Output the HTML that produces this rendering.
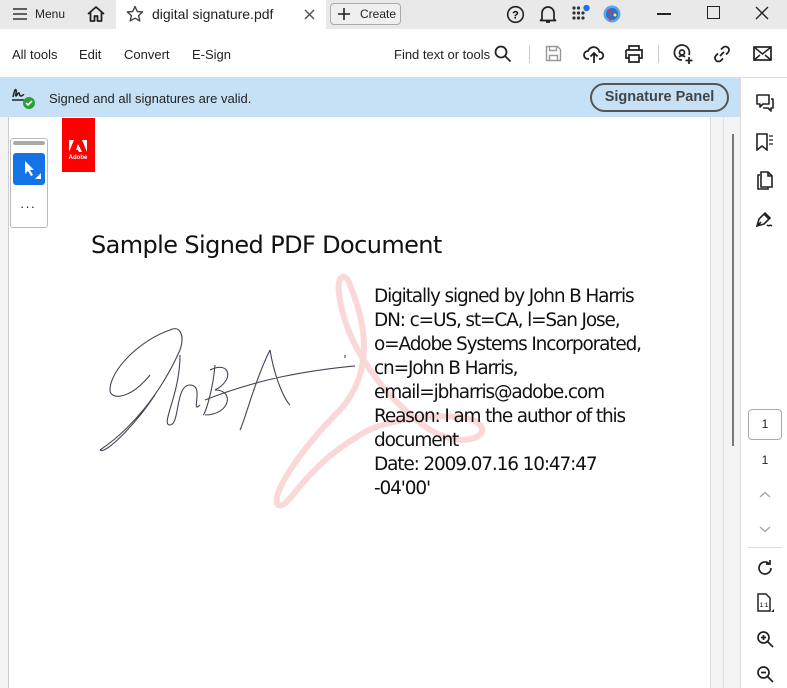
<!DOCTYPE html>
<html><head><meta charset="utf-8"><style>
*{margin:0;padding:0;box-sizing:border-box}
body{width:787px;height:688px;overflow:hidden;font-family:"Liberation Sans",sans-serif;background:#fff;position:relative;color:#222}
.abs{position:absolute}
svg{position:absolute}
.t{font-size:13px;color:#222}
</style></head><body>
<div class="abs" style="left:0;top:0;width:787px;height:29px;background:#e9e9e9"></div>
<div class="abs" style="left:116px;top:0;width:210px;height:29px;background:#fff"></div>
<svg style="left:12px;top:7px" width="16" height="14"><path d="M1 2h14M1 7h14M1 12h14" stroke="#333" stroke-width="1.6"/></svg>
<div class="abs t" style="left:35px;top:7px;font-size:12px">Menu</div>
<svg style="left:86px;top:4px" width="20" height="20"><path d="M2 10L10 3l8 7M4.5 8v9h4v-5h3v5h4V8" fill="none" stroke="#222" stroke-width="1.8" stroke-linejoin="round"/></svg>
<svg style="left:126px;top:5px" width="18" height="18"><path d="M9 1.5l2.3 5 5.3.5-4 3.6 1.2 5.3L9 13.2 4.2 15.9l1.2-5.3-4-3.6 5.3-.5z" fill="none" stroke="#444" stroke-width="1.4" stroke-linejoin="round"/></svg>
<div class="abs t" style="left:152px;top:6px;font-size:14px">digital signature.pdf</div>
<svg style="left:304px;top:9px" width="11" height="11"><path d="M1 1l9 9M10 1l-9 9" stroke="#555" stroke-width="1.5"/></svg>
<div class="abs" style="left:330px;top:3px;width:71px;height:22px;border:1px solid #aaa;border-radius:4px;background:#efefef"></div>
<svg style="left:338px;top:8px" width="12" height="12"><path d="M6 0v12M0 6h12" stroke="#222" stroke-width="1.6"/></svg>
<div class="abs t" style="left:360px;top:7px;font-size:12px">Create</div>
<svg style="left:506px;top:5px" width="19" height="19"><circle cx="9.5" cy="9.5" r="7.8" fill="none" stroke="#222" stroke-width="1.6"/><text x="9.5" y="13.5" font-size="11" font-weight="bold" text-anchor="middle" font-family="Liberation Sans">?</text></svg>
<svg style="left:539px;top:4px" width="18" height="20"><path d="M3 15V9a6 6 0 0 1 12 0v6l1.5 1.5h-15zM7 18h4" fill="none" stroke="#222" stroke-width="1.7" stroke-linejoin="round"/></svg>
<svg style="left:572px;top:5px" width="20" height="16"><g fill="#333"><circle cx="2" cy="3" r="1.6"/><circle cx="6.5" cy="3" r="1.6"/><circle cx="2" cy="8" r="1.6"/><circle cx="6.5" cy="8" r="1.6"/><circle cx="11" cy="8" r="1.6"/><circle cx="2" cy="13" r="1.6"/><circle cx="6.5" cy="13" r="1.6"/><circle cx="11" cy="13" r="1.6"/></g><circle cx="14.5" cy="3" r="3.2" fill="#1a73e8"/></svg>
<svg style="left:603px;top:5px" width="18" height="18"><circle cx="9" cy="9" r="8.5" fill="#5aa8ec"/><circle cx="9" cy="9" r="6" fill="#2a6fd0"/><path d="M5 5l3 4M10 6l3 1M6 10l1 6" stroke="#e33" stroke-width="1.5"/><circle cx="12" cy="10" r="1.5" fill="#ff0"/></svg>
<div class="abs" style="left:657px;top:13px;width:14px;height:1.5px;background:#222"></div>
<div class="abs" style="left:707px;top:6px;width:13px;height:13px;border:1.4px solid #222"></div>
<svg style="left:755px;top:6px" width="14" height="14"><path d="M1 1l12 12M13 1L1 13" stroke="#222" stroke-width="1.4"/></svg>
<div class="abs" style="left:0;top:77px;width:787px;height:1px;background:#ddd"></div>
<div class="abs t" style="left:12px;top:47px">All tools</div>
<div class="abs t" style="left:79px;top:47px">Edit</div>
<div class="abs t" style="left:124px;top:47px">Convert</div>
<div class="abs t" style="left:192px;top:47px">E-Sign</div>
<div class="abs t" style="left:394px;top:47px">Find text or tools</div>
<svg style="left:494px;top:45px" width="18" height="18"><circle cx="7" cy="7" r="5.5" fill="none" stroke="#222" stroke-width="1.8"/><path d="M11 11l5.5 5.5" stroke="#222" stroke-width="1.8"/></svg>
<div class="abs" style="left:529px;top:45px;width:1px;height:18px;background:#ccc"></div>
<svg style="left:545px;top:45px" width="17" height="17"><path d="M1.5 1.5h11l3 3v11h-14z M4.5 1.5v4h7v-4 M4.5 15.5v-5h8v5" fill="none" stroke="#999" stroke-width="1.4"/></svg>
<svg style="left:583px;top:44px" width="22" height="20"><path d="M6 15H5a4 4 0 0 1 0-8 6 6 0 0 1 11.5 1A3.5 3.5 0 0 1 17 15h-1M11 19V9M7.5 12.5L11 9l3.5 3.5" fill="none" stroke="#222" stroke-width="1.8"/></svg>
<svg style="left:624px;top:45px" width="20" height="18"><path d="M5 5V1h10v4M2 5h16v8h-3M5 13H2V5M5 10h10v7H5z" fill="none" stroke="#222" stroke-width="1.7"/></svg>
<div class="abs" style="left:658px;top:45px;width:1px;height:18px;background:#ccc"></div>
<svg style="left:673px;top:44px" width="21" height="21"><path d="M9 16a7.5 7.5 0 1 1 7-5M6 13a4 4 0 0 1 6 0M9 6a2.5 2.5 0 1 1 0 5 2.5 2.5 0 0 1 0-5M16 13v7M12.5 16.5h7" fill="none" stroke="#222" stroke-width="1.7"/></svg>
<svg style="left:713px;top:45px" width="18" height="18"><path d="M7 11l4-4M8 4.5l2-2a3.3 3.3 0 0 1 5 5l-2 2M10 13.5l-2 2a3.3 3.3 0 0 1-5-5l2-2" fill="none" stroke="#222" stroke-width="1.8"/></svg>
<svg style="left:753px;top:46px" width="19" height="15"><rect x="1" y="1" width="17" height="13" fill="none" stroke="#222" stroke-width="1.7"/><path d="M1 1l8.5 7L18 1M1 14l6-5M18 14l-6-5" fill="none" stroke="#222" stroke-width="1.5"/></svg>
<div class="abs" style="left:0;top:78px;width:741px;height:39px;background:#c6e1f5"></div>
<svg style="left:10px;top:85px" width="28" height="26"><path d="M3 12c1-4 2-9 3-7s-1 6 0 6 2-4 3-3 0 3 2 3 2-2 3-1" fill="none" stroke="#222" stroke-width="1.5"/><path d="M2 15h12" stroke="#222" stroke-width="1.5"/><circle cx="19" cy="18" r="6" fill="#2d9d3a"/><path d="M16 18l2 2 4-4" fill="none" stroke="#fff" stroke-width="1.6"/></svg>
<div class="abs t" style="left:49px;top:91px;font-size:13px">Signed and all signatures are valid.</div>
<div class="abs" style="left:590px;top:83px;width:139px;height:29px;border:2px solid #555;border-radius:15px;font-size:14.5px;font-weight:bold;color:#444;text-align:center;line-height:25px">Signature Panel</div>
<div class="abs" style="left:740px;top:78px;width:1px;height:610px;background:#ddd"></div>
<svg style="left:755px;top:93px" width="20" height="19"><path d="M2 2h12v9H8l-3 3v-3H2z" fill="none" stroke="#222" stroke-width="1.6" stroke-linejoin="round"/><path d="M16 6h2v9h-2v3l-3-3h-5" fill="none" stroke="#222" stroke-width="1.6" stroke-linejoin="round"/></svg>
<svg style="left:755px;top:133px" width="20" height="18"><path d="M2 1h10v16l-5-4-5 4z" fill="none" stroke="#222" stroke-width="1.6"/><path d="M14 3h4M14 7h4M14 11h4" stroke="#222" stroke-width="1.3"/></svg>
<svg style="left:756px;top:171px" width="18" height="20"><path d="M4 4H2v14h10v-2M5 1h7l4 4v11H5z M12 1v4h4" fill="none" stroke="#222" stroke-width="1.6"/></svg>
<svg style="left:755px;top:211px" width="20" height="18"><path d="M2 15l2-7 6-6 5 5-6 6zM2 15l4-4M9 3l5 5M12 14c2 2 3-1 5 1" fill="none" stroke="#222" stroke-width="1.6"/></svg>
<div class="abs" style="left:748px;top:409px;width:34px;height:31px;border:1px solid #aaa;border-radius:4px;font-size:12px;text-align:center;line-height:29px">1</div>
<div class="abs" style="left:748px;top:453px;width:34px;font-size:12px;text-align:center">1</div>
<svg style="left:759px;top:491px" width="12" height="8"><path d="M1 6l5-4.5 5 4.5" fill="none" stroke="#aaa" stroke-width="1.5"/></svg>
<svg style="left:759px;top:525px" width="12" height="8"><path d="M1 2l5 4.5 5-4.5" fill="none" stroke="#aaa" stroke-width="1.5"/></svg>
<div class="abs" style="left:748px;top:547px;width:34px;height:1px;background:#ddd"></div>
<svg style="left:756px;top:559px" width="18" height="18"><path d="M15 9a6 6 0 1 1-2-4.5M14 1v4h-4" fill="none" stroke="#222" stroke-width="1.7"/></svg>
<svg style="left:756px;top:593px" width="20" height="22"><path d="M2 1h8l4 4v13H2z" fill="none" stroke="#222" stroke-width="1.5"/><text x="8" y="14" font-size="6.5" text-anchor="middle" font-family="Liberation Sans">1:1</text><path d="M18 16v3h-3z" fill="#222"/></svg>
<svg style="left:756px;top:630px" width="19" height="19"><circle cx="7.5" cy="7.5" r="5.5" fill="none" stroke="#222" stroke-width="1.7"/><path d="M11.5 11.5l5.5 5.5M5 7.5h5M7.5 5v5" stroke="#222" stroke-width="1.7"/></svg>
<svg style="left:756px;top:665px" width="19" height="19"><circle cx="7.5" cy="7.5" r="5.5" fill="none" stroke="#222" stroke-width="1.7"/><path d="M11.5 11.5l5.5 5.5M5 7.5h5" stroke="#222" stroke-width="1.7"/></svg>
<div class="abs" style="left:0;top:117px;width:9px;height:571px;background:#f3f3f3;border-right:1px solid #ccc"></div>
<div class="abs" style="left:710px;top:117px;width:30px;height:571px;background:#f3f3f3;border-left:1px solid #ddd"></div>
<div class="abs" style="left:723px;top:117px;width:1px;height:571px;background:#e0e0e0"></div>
<div class="abs" style="left:732px;top:134px;width:2px;height:312px;background:#777"></div>
<div class="abs" style="left:62px;top:118px;width:33px;height:54px;background:#f00"></div>
<svg style="left:66px;top:138px" width="24" height="26"><path d="M3 2h5L3 14zM16 2h5v12zM12 6l4 8h-3l-1-2h-2z" fill="#fff"/><text x="12" y="21" font-size="6" fill="#fff" font-weight="bold" text-anchor="middle" font-family="Liberation Sans">Adobe</text></svg>
<div class="abs" style="left:10px;top:138px;width:38px;height:90px;border:1px solid #bbb;border-radius:3px;background:#fff"></div>
<div class="abs" style="left:13px;top:141px;width:32px;height:4px;background:#aaa;border-radius:2px"></div>
<div class="abs" style="left:13px;top:153px;width:32px;height:32px;background:#1473e6;border-radius:3px"></div>
<svg style="left:23px;top:160px" width="20" height="22"><path d="M2 1v13l3-3 3 5 2-1-3-5h4z" fill="#fff"/><path d="M18 13v6h-6z" fill="#fff"/></svg>
<div class="abs" style="left:20px;top:199px;font-size:13px;letter-spacing:1px">···</div>
<div class="abs" style="left:91px;top:231px;font-size:24px;color:#111;font-family:'DejaVu Sans','Liberation Sans',sans-serif;letter-spacing:-0.6px">Sample Signed PDF Document</div>
<svg style="left:240px;top:270px" width="260" height="250"><path d="M38 235C30 225 60 180 100 140 140 95 120 40 110 15 105 0 95 5 100 30 110 90 160 140 190 160 225 180 250 165 240 155 230 140 150 145 120 165 60 200 50 240 38 235z" fill="none" stroke="#fbd8d8" stroke-width="6" stroke-linejoin="round"/></svg>
<svg style="left:95px;top:325px" width="260" height="140"><g fill="none" stroke="#445" stroke-width="1.1"><path d="M5 125c30-20 60-55 80-100 5-15 0-25-10-20-30 10-60 40-60 60 0 10 20 10 40-15M60 70c-20 30-50 60-55 55M85 30c0 40-20 70-10 70 10 0 5-40 20-40s0 30 10 20M120 40c-2 25-10 50-12 50M115 45c20-10 25 10 5 20 20 0 15 25-10 25M110 75c50-20 100-30 160-35M175 25c-15 30-25 70-30 80M175 25c5 30 15 50 20 55M250 30v3"/></g></svg>
<div class="abs" style="left:374px;top:285px;font-size:18.5px;line-height:24px;color:#111;font-family:'DejaVu Sans','Liberation Sans',sans-serif;letter-spacing:-1.15px">Digitally signed by John B Harris<br>DN: c=US, st=CA, l=San Jose,<br>o=Adobe Systems Incorporated,<br>cn=John B Harris,<br>email=jbharris@adobe.com<br>Reason: I am the author of this<br>document<br>Date: 2009.07.16 10:47:47<br>-04'00'</div>
</body></html>
